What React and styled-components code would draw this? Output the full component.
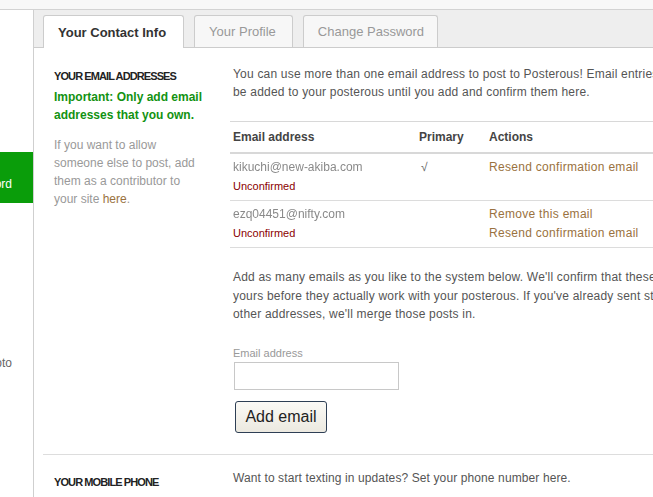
import React from "react";
import styled, { createGlobalStyle } from "styled-components";

const Global = createGlobalStyle`
  html, body { margin: 0; padding: 0; background: #fff; overflow: hidden; }
  body { font-family: Arial, "Liberation Sans", sans-serif; font-size: 12px; color: #555; }
`;

const TopStrip = styled.div`
  height: 9px;
  background: #f8f8f8;
  border-bottom: 1px solid #d3d3d3;
`;

const Frame = styled.div`
  display: flex;
  width: 1000px;
  height: 600px;
`;

const Sidebar = styled.div`
  width: 33px;
  flex: none;
  border-right: 1px solid #cfcfcf;
  overflow: hidden;
`;

const SideInner = styled.div`
  width: 160px;
  margin-left: -127px;
  display: flex;
  flex-direction: column;
`;

const SideItem = styled.div`
  height: ${(p) => p.$h}px;
  box-sizing: border-box;
  padding: ${(p) => p.$pt || 0}px 21px 0 0;
  text-align: right;
  font-size: 12px;
  color: ${(p) => (p.$active ? "#fff" : "#666")};
  background: ${(p) => (p.$active ? "#0a9d0a" : "transparent")};
`;

const Main = styled.div`
  flex: 1;
  display: flex;
  flex-direction: column;
`;

const TabBar = styled.div`
  height: 38px;
  box-sizing: border-box;
  background: #eeeeee;
  border-bottom: 1px solid #cccccc;
  padding: 6px 0 0 9px;
  display: flex;
  align-items: flex-end;
  gap: 10px;
`;

const Tab = styled.div`
  box-sizing: border-box;
  padding: 0 ${(p) => p.$pr}px 0 ${(p) => p.$pl}px;
  border: 1px solid #cccccc;
  border-bottom: none;
  border-radius: 3px 3px 0 0;
  display: flex;
  align-items: center;
  font-size: 13px;
  font-weight: ${(p) => (p.$active ? "bold" : "normal")};
  color: ${(p) => (p.$active ? "#333" : "#999")};
  background: ${(p) => (p.$active ? "#fff" : "#f7f7f7")};
  margin-bottom: ${(p) => (p.$active ? "-1px" : "0")};
  height: ${(p) => (p.$active ? "33px" : "32px")};
`;

const Section = styled.div`
  display: grid;
  grid-template-columns: 176px 1fr;
  padding: ${(p) => p.$pt}px 0 0 20px;
`;

const SideCol = styled.div``;

const Heading = styled.div`
  font-size: 11px;
  font-weight: bold;
  color: #222;
  letter-spacing: -0.9px;
  line-height: 18px;
  text-transform: uppercase;
  margin-top: ${(p) => p.$mt || 0}px;
  white-space: nowrap;
`;

const Important = styled.div`
  font-size: 12px;
  font-weight: bold;
  color: #129212;
  line-height: 18px;
  margin-top: 3px;
`;

const Hint = styled.div`
  font-size: 12px;
  color: #999;
  line-height: 18px;
  margin-top: 12px;
  width: 150px;
`;

const Link = styled.a`
  color: #9a7240;
  text-decoration: none;
`;

const Content = styled.div`
  display: flex;
  flex-direction: column;
`;

const Para = styled.p`
  margin: ${(p) => p.$mt || 0}px 0 0 0;
  padding-left: 3px;
  font-size: 12px;
  letter-spacing: ${(p) => p.$ls || 0}px;
  line-height: ${(p) => p.$lh || 18}px;
  color: #555;
  white-space: nowrap;
`;

const Table = styled.table`
  border-collapse: collapse;
  width: 440px;
  margin-top: 20px;
  border-top: 1px solid #d8d8d8;
  font-size: 12px;
`;

const Th = styled.th`
  text-align: left;
  font-weight: bold;
  color: #444;
  padding: 6px 3px 6px 3px;
  line-height: 18px;
  border-bottom: 2px solid #d8d8d8;
  width: ${(p) => p.$w}px;
`;

const Td = styled.td`
  vertical-align: top;
  padding: 4px 3px 4px 3px;
  line-height: 19px;
  border-bottom: 1px solid #dcdcdc;
  color: #555;
  letter-spacing: 0.3px;
`;

const Email = styled.div`
  color: #8a8a8a;
  letter-spacing: 0;
  filter: blur(0.5px);
`;

const Unconfirmed = styled.div`
  color: #8b0000;
  font-size: 11px;
  letter-spacing: 0;
`;

const Check = styled.span`
  color: #666;
  padding-left: 2px;
`;

const ActionLink = styled.div`
  color: #9a7240;
`;

const FieldLabel = styled.label`
  display: block;
  margin: 22px 0 0 3px;
  font-size: 11px;
  color: #999;
  line-height: 14px;
`;

const Input = styled.input`
  display: block;
  box-sizing: border-box;
  width: 165px;
  height: 28px;
  margin: 2px 0 0 4px;
  border: 1px solid #c8c8c8;
  background: #fff;
`;

const Button = styled.button`
  align-self: flex-start;
  box-sizing: border-box;
  width: 92px;
  height: 32px;
  margin: 11px 0 0 5px;
  border: 1px solid #2e3f55;
  border-radius: 3px;
  background: linear-gradient(#fbfaf6, #ece9e0);
  font-family: Arial, "Liberation Sans", sans-serif;
  font-size: 16px;
  color: #222;
  padding: 0;
`;

const Divider = styled.div`
  margin: 21px 0 0 9px;
  border-top: 1px solid #dddddd;
`;

export default function App() {
  return (
    <>
      <Global />
      <TopStrip />
      <Frame>
        <Sidebar>
          <SideInner>
            <SideItem $h={142} />
            <SideItem $h={51} $pt={25} $active>
              Password
            </SideItem>
            <SideItem $h={153} />
            <SideItem $h={40}>Photo</SideItem>
          </SideInner>
        </Sidebar>
        <Main>
          <TabBar>
            <Tab $active $pl={14} $pr={17}>Your Contact Info</Tab>
            <Tab $pl={14} $pr={16}>Your Profile</Tab>
            <Tab $pl={14} $pr={13}>Change Password</Tab>
          </TabBar>
          <Section $pt={17}>
            <SideCol>
              <Heading $mt={2}>Your Email Addresses</Heading>
              <Important>
                Important: Only add email addresses that you own.
              </Important>
              <Hint>
                If you want to allow someone else to post, add them as a
                contributor to your site <Link href="#">here</Link>.
              </Hint>
            </SideCol>
            <Content>
              <Para $ls={0.2}>
                You can use more than one email address to post to Posterous!
                Email entries won't
                <br />
                be added to your posterous until you add and confirm them here.
              </Para>
              <Table>
                <thead>
                  <tr>
                    <Th $w={180}>Email address</Th>
                    <Th $w={64}>Primary</Th>
                    <Th>Actions</Th>
                  </tr>
                </thead>
                <tbody>
                  <tr>
                    <Td>
                      <Email>kikuchi@new-akiba.com</Email>
                      <Unconfirmed>Unconfirmed</Unconfirmed>
                    </Td>
                    <Td>
                      <Check>√</Check>
                    </Td>
                    <Td>
                      <ActionLink>Resend confirmation email</ActionLink>
                    </Td>
                  </tr>
                  <tr>
                    <Td>
                      <Email>ezq04451@nifty.com</Email>
                      <Unconfirmed>Unconfirmed</Unconfirmed>
                    </Td>
                    <Td />
                    <Td>
                      <ActionLink>Remove this email</ActionLink>
                      <ActionLink>Resend confirmation email</ActionLink>
                    </Td>
                  </tr>
                </tbody>
              </Table>
              <Para $mt={20} $lh={18.5} $ls={0.2}>
                Add as many emails as you like to the system below. We'll confirm
                that these are
                <br />
                yours before they actually work with your posterous. If you've
                already sent stuff from
                <br />
                other addresses, we'll merge those posts in.
              </Para>
              <FieldLabel>Email address</FieldLabel>
              <Input type="text" />
              <Button>Add email</Button>
            </Content>
          </Section>
          <Divider />
          <Section $pt={14}>
            <SideCol>
              <Heading $mt={4}>Your Mobile Phone</Heading>
            </SideCol>
            <Content>
              <Para $ls={0.11}>
                Want to start texting in updates? Set your phone number here.
              </Para>
            </Content>
          </Section>
        </Main>
      </Frame>
    </>
  );
}
